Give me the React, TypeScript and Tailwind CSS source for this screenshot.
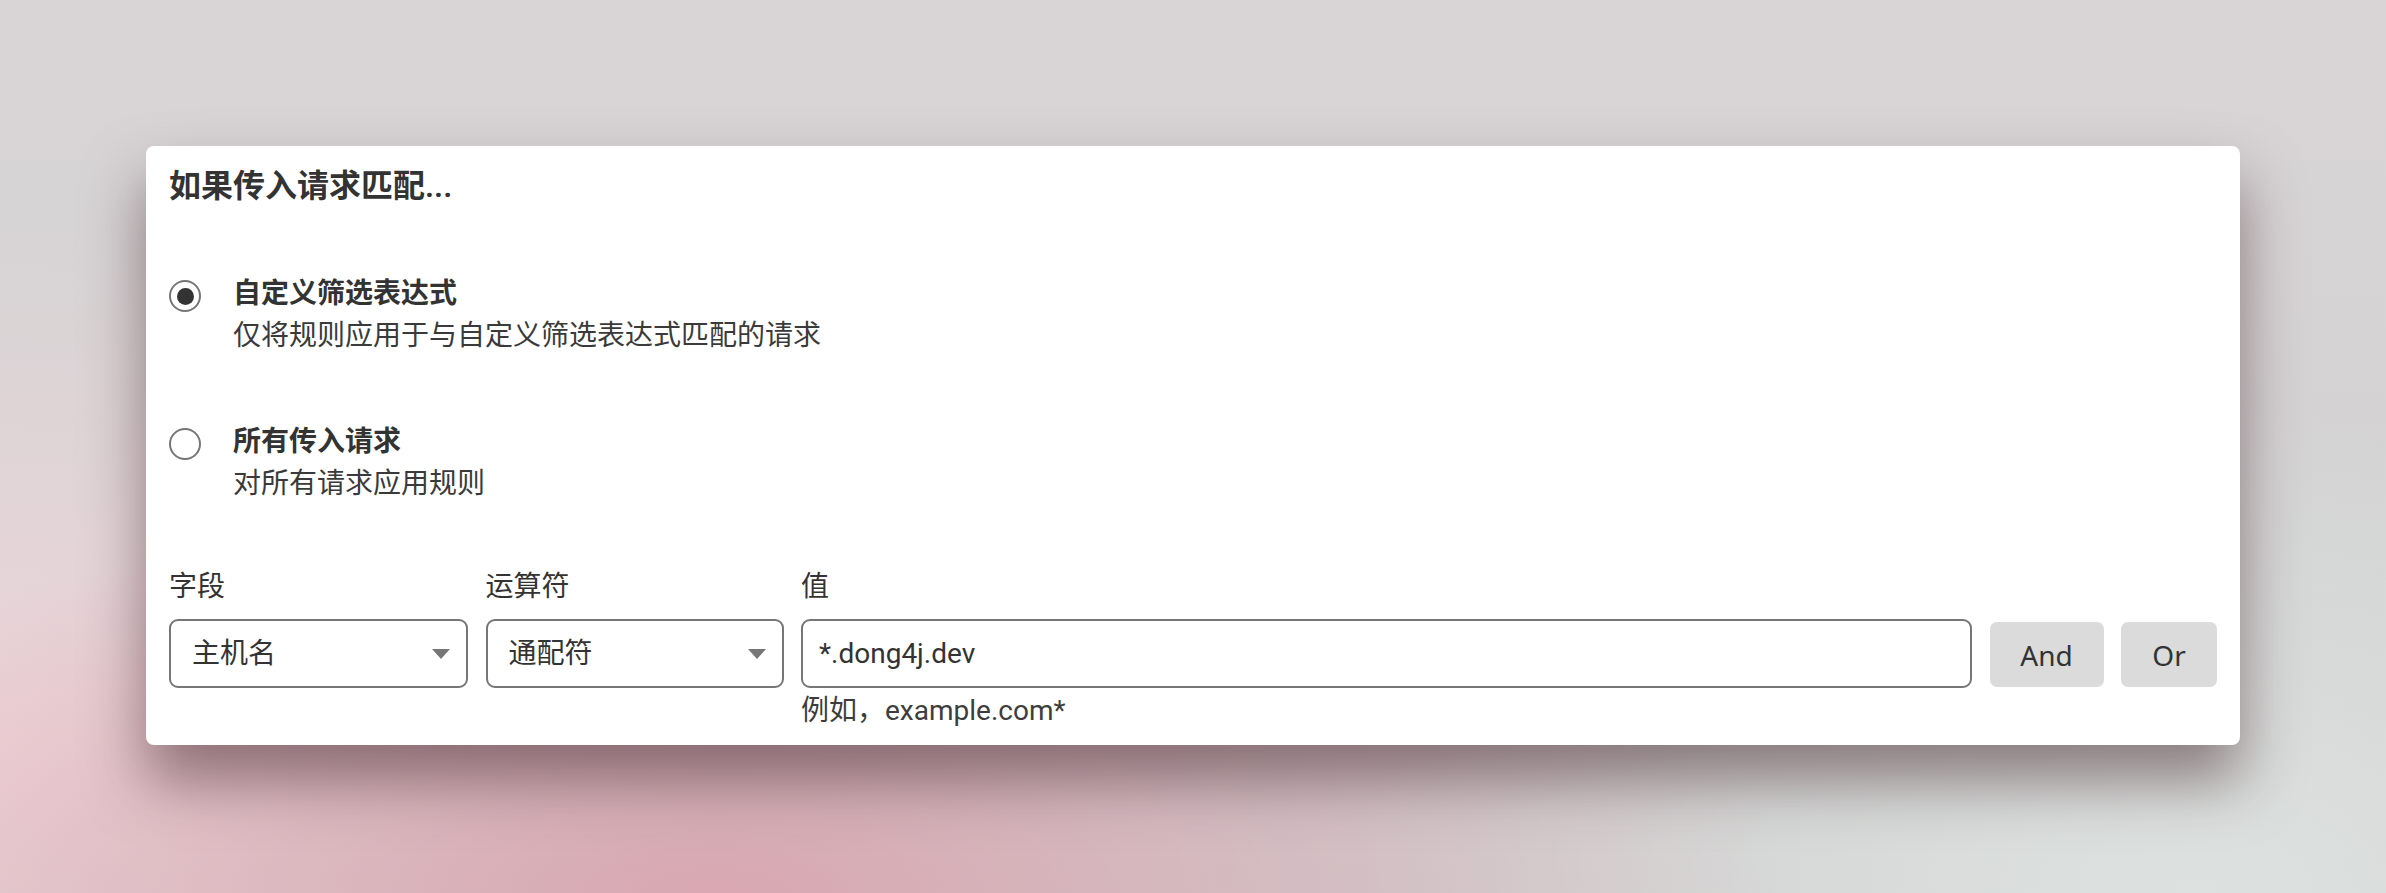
import React, { useState } from "react";

const font = "font-['Roboto','Noto_Sans_CJK_SC',sans-serif]";

const Radio = ({ checked }: { checked: boolean }) => (
  <div className="mt-[7px] flex h-[32px] w-[32px] shrink-0 items-center justify-center rounded-full border-2 border-[#767676] bg-white">
    {checked && <div className="h-[17px] w-[17px] rounded-full bg-[#333]" />}
  </div>
);

const Caret = () => (
  <svg width="18" height="10" viewBox="0 0 18 10" className="shrink-0">
    <path d="M0 0 H18 L9 10 Z" fill="#767676" />
  </svg>
);

const FakeSelect = ({ value }: { value: string }) => (
  <div className="flex h-[69px] items-center justify-between rounded-[9px] border-2 border-[#767676] bg-white pl-[21px] pr-[16px] text-[28px] text-[#333]">
    <span>{value}</span>
    <Caret />
  </div>
);

const App = () => {
  const [mode, setMode] = useState("custom");

  const options = [
    {
      key: "custom",
      title: "自定义筛选表达式",
      desc: "仅将规则应用于与自定义筛选表达式匹配的请求",
    },
    { key: "all", title: "所有传入请求", desc: "对所有请求应用规则" },
  ];

  return (
    <div
      className={`min-h-[893px] w-full overflow-hidden bg-[radial-gradient(ellipse_45%_45%_at_30%_100%,#d9a7b1_0%,transparent_100%),radial-gradient(ellipse_30%_60%_at_0%_85%,#efd6da_0%,transparent_100%),radial-gradient(ellipse_35%_55%_at_92%_100%,#dde2e0_0%,transparent_100%),linear-gradient(180deg,#d9d5d6_0%,#d3d2d3_60%,#cfcfcf_100%)] pl-[146px] pt-[146px] ${font}`}
    >
      <div className="w-[2094px] rounded-[8px] bg-white px-[23px] pb-[16px] pt-[20px] text-[#333] shadow-[0_35px_60px_0_rgba(60,30,35,0.5)]">
        <h2 className="text-[32px] font-semibold leading-[40px] text-[#333]">
          如果传入请求匹配...
        </h2>

        <div className="mt-[67px] flex flex-col gap-[64px]">
          {options.map((o) => (
            <div
              key={o.key}
              className="flex cursor-pointer gap-[32px]"
              onClick={() => setMode(o.key)}
            >
              <Radio checked={mode === o.key} />
              <div className="flex flex-col">
                <span className="text-[28px] font-semibold leading-[42px]">
                  {o.title}
                </span>
                <span className="text-[28px] leading-[42px] text-[#3a3a3a]">
                  {o.desc}
                </span>
              </div>
            </div>
          ))}
        </div>

        <div className="mt-[64px] grid grid-cols-[299px_298px_1fr_114px_96px] gap-x-[17.5px] text-[28px]">
          <span className="leading-[36px]">字段</span>
          <span className="leading-[36px]">运算符</span>
          <span className="leading-[36px]">值</span>
          <span />
          <span />

          <div className="mt-[14px]">
            <FakeSelect value="主机名" />
          </div>
          <div className="mt-[14px]">
            <FakeSelect value="通配符" />
          </div>
          <div className="mt-[14px]">
            <input
              readOnly
              value="*.dong4j.dev"
              className="h-[69px] w-full rounded-[9px] border-2 border-[#767676] bg-white pl-[16px] text-[28px] text-[#333] outline-none"
            />
          </div>
          <button className="mt-[17px] h-[65px] rounded-[7px] bg-[#dbdbdb] font-['Noto_Sans',sans-serif] text-[28px] text-[#333]">
            And
          </button>
          <button className="mt-[17px] h-[65px] rounded-[7px] bg-[#dbdbdb] font-['Noto_Sans',sans-serif] text-[28px] text-[#333]">
            Or
          </button>

          <span />
          <span />
          <span className="mt-[5px] leading-[36px] text-[#3d3d3d]">
            例如，example.com*
          </span>
          <span />
          <span />
        </div>
      </div>
    </div>
  );
};

export default App;
